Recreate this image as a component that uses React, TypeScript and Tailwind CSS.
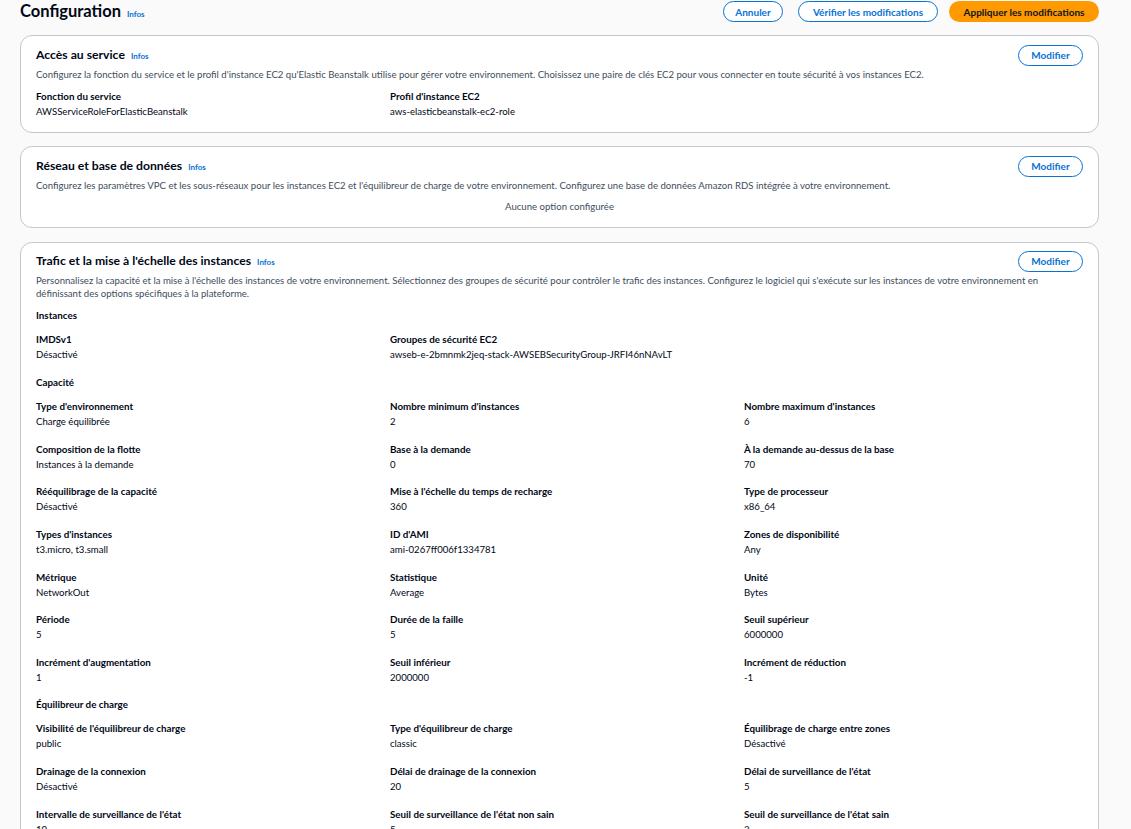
import React from 'react';

type Field = { label: string; value: string };

const font = { fontFamily: 'Lato, "Noto Sans", Arial, sans-serif' };

function Infos() {
  return <span className="ml-[6px] text-[8px] font-bold text-[#0972d3]">Infos</span>;
}

function OutlineButton({ children, w }: { children: React.ReactNode; w: string }) {
  return (
    <button className={`${w} flex h-[21px] items-center justify-center rounded-full border-[1.5px] border-[#0972d3] bg-white text-[10px] font-bold leading-none text-[#0972d3]`}>
      {children}
    </button>
  );
}

function CardHeader({ title }: { title: string }) {
  return (
    <div className="flex h-[20px] items-center justify-between">
      <h2 className="flex items-baseline text-[12.2px] font-bold text-[#000716]">
        {title}
        <Infos />
      </h2>
      <OutlineButton w="w-[65px]">Modifier</OutlineButton>
    </div>
  );
}

function FieldGrid({ fields }: { fields: Field[] }) {
  return (
    <div className="grid grid-cols-3 gap-x-[15px] gap-y-[10.7px]">
      {fields.map((f, i) => (
        <div key={i}>
          <div className="text-[9.8px] font-bold leading-[16px] text-[#000716]">{f.label}</div>
          <div className="text-[9.6px] leading-[16px] text-[#000716]">{f.value}</div>
        </div>
      ))}
    </div>
  );
}

function SectionTitle({ children }: { children: React.ReactNode }) {
  return <div className="text-[9.8px] font-bold leading-[16px] text-[#000716]">{children}</div>;
}

const capacite: Field[] = [
  { label: "Type d'environnement", value: 'Charge équilibrée' },
  { label: "Nombre minimum d'instances", value: '2' },
  { label: "Nombre maximum d'instances", value: '6' },
  { label: 'Composition de la flotte', value: 'Instances à la demande' },
  { label: 'Base à la demande', value: '0' },
  { label: 'À la demande au-dessus de la base', value: '70' },
  { label: 'Rééquilibrage de la capacité', value: 'Désactivé' },
  { label: "Mise à l'échelle du temps de recharge", value: '360' },
  { label: 'Type de processeur', value: 'x86_64' },
  { label: "Types d'instances", value: 't3.micro, t3.small' },
  { label: "ID d'AMI", value: 'ami-0267ff006f1334781' },
  { label: 'Zones de disponibilité', value: 'Any' },
  { label: 'Métrique', value: 'NetworkOut' },
  { label: 'Statistique', value: 'Average' },
  { label: 'Unité', value: 'Bytes' },
  { label: 'Période', value: '5' },
  { label: 'Durée de la faille', value: '5' },
  { label: 'Seuil supérieur', value: '6000000' },
  { label: "Incrément d'augmentation", value: '1' },
  { label: 'Seuil inférieur', value: '2000000' },
  { label: 'Incrément de réduction', value: '-1' },
];

const equilibreur: Field[] = [
  { label: "Visibilité de l'équilibreur de charge", value: 'public' },
  { label: "Type d'équilibreur de charge", value: 'classic' },
  { label: 'Équilibrage de charge entre zones', value: 'Désactivé' },
  { label: 'Drainage de la connexion', value: 'Désactivé' },
  { label: 'Délai de drainage de la connexion', value: '20' },
  { label: "Délai de surveillance de l'état", value: '5' },
  { label: "Intervalle de surveillance de l'état", value: '10' },
  { label: "Seuil de surveillance de l'état non sain", value: '5' },
  { label: "Seuil de surveillance de l'état sain", value: '3' },
];

export default function App() {
  return (
    <div style={font} className="min-h-screen bg-[#fafafa] pb-10 pl-[20px] pr-[32px] pt-[1px] text-[#000716]">
      <div className="flex h-[21px] items-center justify-between">
        <h1 className="flex items-baseline text-[16.5px] font-bold text-[#000716]">
          Configuration
          <Infos />
        </h1>
        <div className="flex items-center">
          <OutlineButton w="w-[60px]">Annuler</OutlineButton>
          <div className="ml-[15px]">
            <OutlineButton w="w-[140px]">Vérifier les modifications</OutlineButton>
          </div>
          <button className="ml-[11px] flex h-[21px] w-[150px] items-center justify-center rounded-full bg-[#ff9900] text-[10px] font-bold leading-none text-[#0f141a]">
            Appliquer les modifications
          </button>
        </div>
      </div>

      <div className="mt-[13px] flex flex-col">
        <section className="rounded-[12px] border border-[#c6c6cd] bg-white px-[15px] pb-[12px] pt-[9px]">
          <CardHeader title="Accès au service" />
          <p className="mt-[3px] text-[9.6px] leading-[13px] text-[#414d5c]">
            Configurez la fonction du service et le profil d'instance EC2 qu'Elastic Beanstalk utilise pour gérer votre environnement. Choisissez une paire de clés EC2 pour vous connecter en toute sécurité à vos instances EC2.
          </p>
          <div className="mt-[7px] grid grid-cols-3 gap-x-[15px]">
            <div>
              <div className="text-[9.8px] font-bold leading-[16px]">Fonction du service</div>
              <div className="text-[9.6px] leading-[16px]">AWSServiceRoleForElasticBeanstalk</div>
            </div>
            <div>
              <div className="text-[9.8px] font-bold leading-[16px]">Profil d'instance EC2</div>
              <div className="text-[9.6px] leading-[16px]">aws-elasticbeanstalk-ec2-role</div>
            </div>
          </div>
        </section>

        <section className="mt-[13px] rounded-[12px] border border-[#c6c6cd] bg-white px-[15px] pb-[12px] pt-[9px]">
          <CardHeader title="Réseau et base de données" />
          <p className="mt-[3px] text-[9.6px] leading-[13px] text-[#414d5c]">
            Configurez les paramètres VPC et les sous-réseaux pour les instances EC2 et l'équilibreur de charge de votre environnement. Configurez une base de données Amazon RDS intégrée à votre environnement.
          </p>
          <div className="mt-[7px] text-center text-[9.6px] leading-[16px] text-[#414d5c]">Aucune option configurée</div>
        </section>

        <section className="mt-[14px] rounded-[12px] border border-[#c6c6cd] bg-white px-[15px] pb-[20px] pt-[8px]">
          <CardHeader title="Trafic et la mise à l'échelle des instances" />
          <p className="mt-[3px] pr-[20px] text-[9.6px] leading-[13px] text-[#414d5c]">
            Personnalisez la capacité et la mise à l'échelle des instances de votre environnement. Sélectionnez des groupes de sécurité pour contrôler le trafic des instances. Configurez le logiciel qui s'exécute sur les instances de votre environnement en définissant des options spécifiques à la plateforme.
          </p>
          <div className="mt-[7px]">
            <SectionTitle>Instances</SectionTitle>
          </div>
          <div className="mt-[8px]">
            <FieldGrid
              fields={[
                { label: 'IMDSv1', value: 'Désactivé' },
                { label: 'Groupes de sécurité EC2', value: 'awseb-e-2bmnmk2jeq-stack-AWSEBSecurityGroup-JRFI46nNAvLT' },
              ]}
            />
          </div>
          <div className="mt-[11px]">
            <SectionTitle>Capacité</SectionTitle>
          </div>
          <div className="mt-[8px]">
            <FieldGrid fields={capacite} />
          </div>
          <div className="mt-[10px]">
            <SectionTitle>Équilibreur de charge</SectionTitle>
          </div>
          <div className="mt-[8px]">
            <FieldGrid fields={equilibreur} />
          </div>
        </section>
      </div>
    </div>
  );
}
